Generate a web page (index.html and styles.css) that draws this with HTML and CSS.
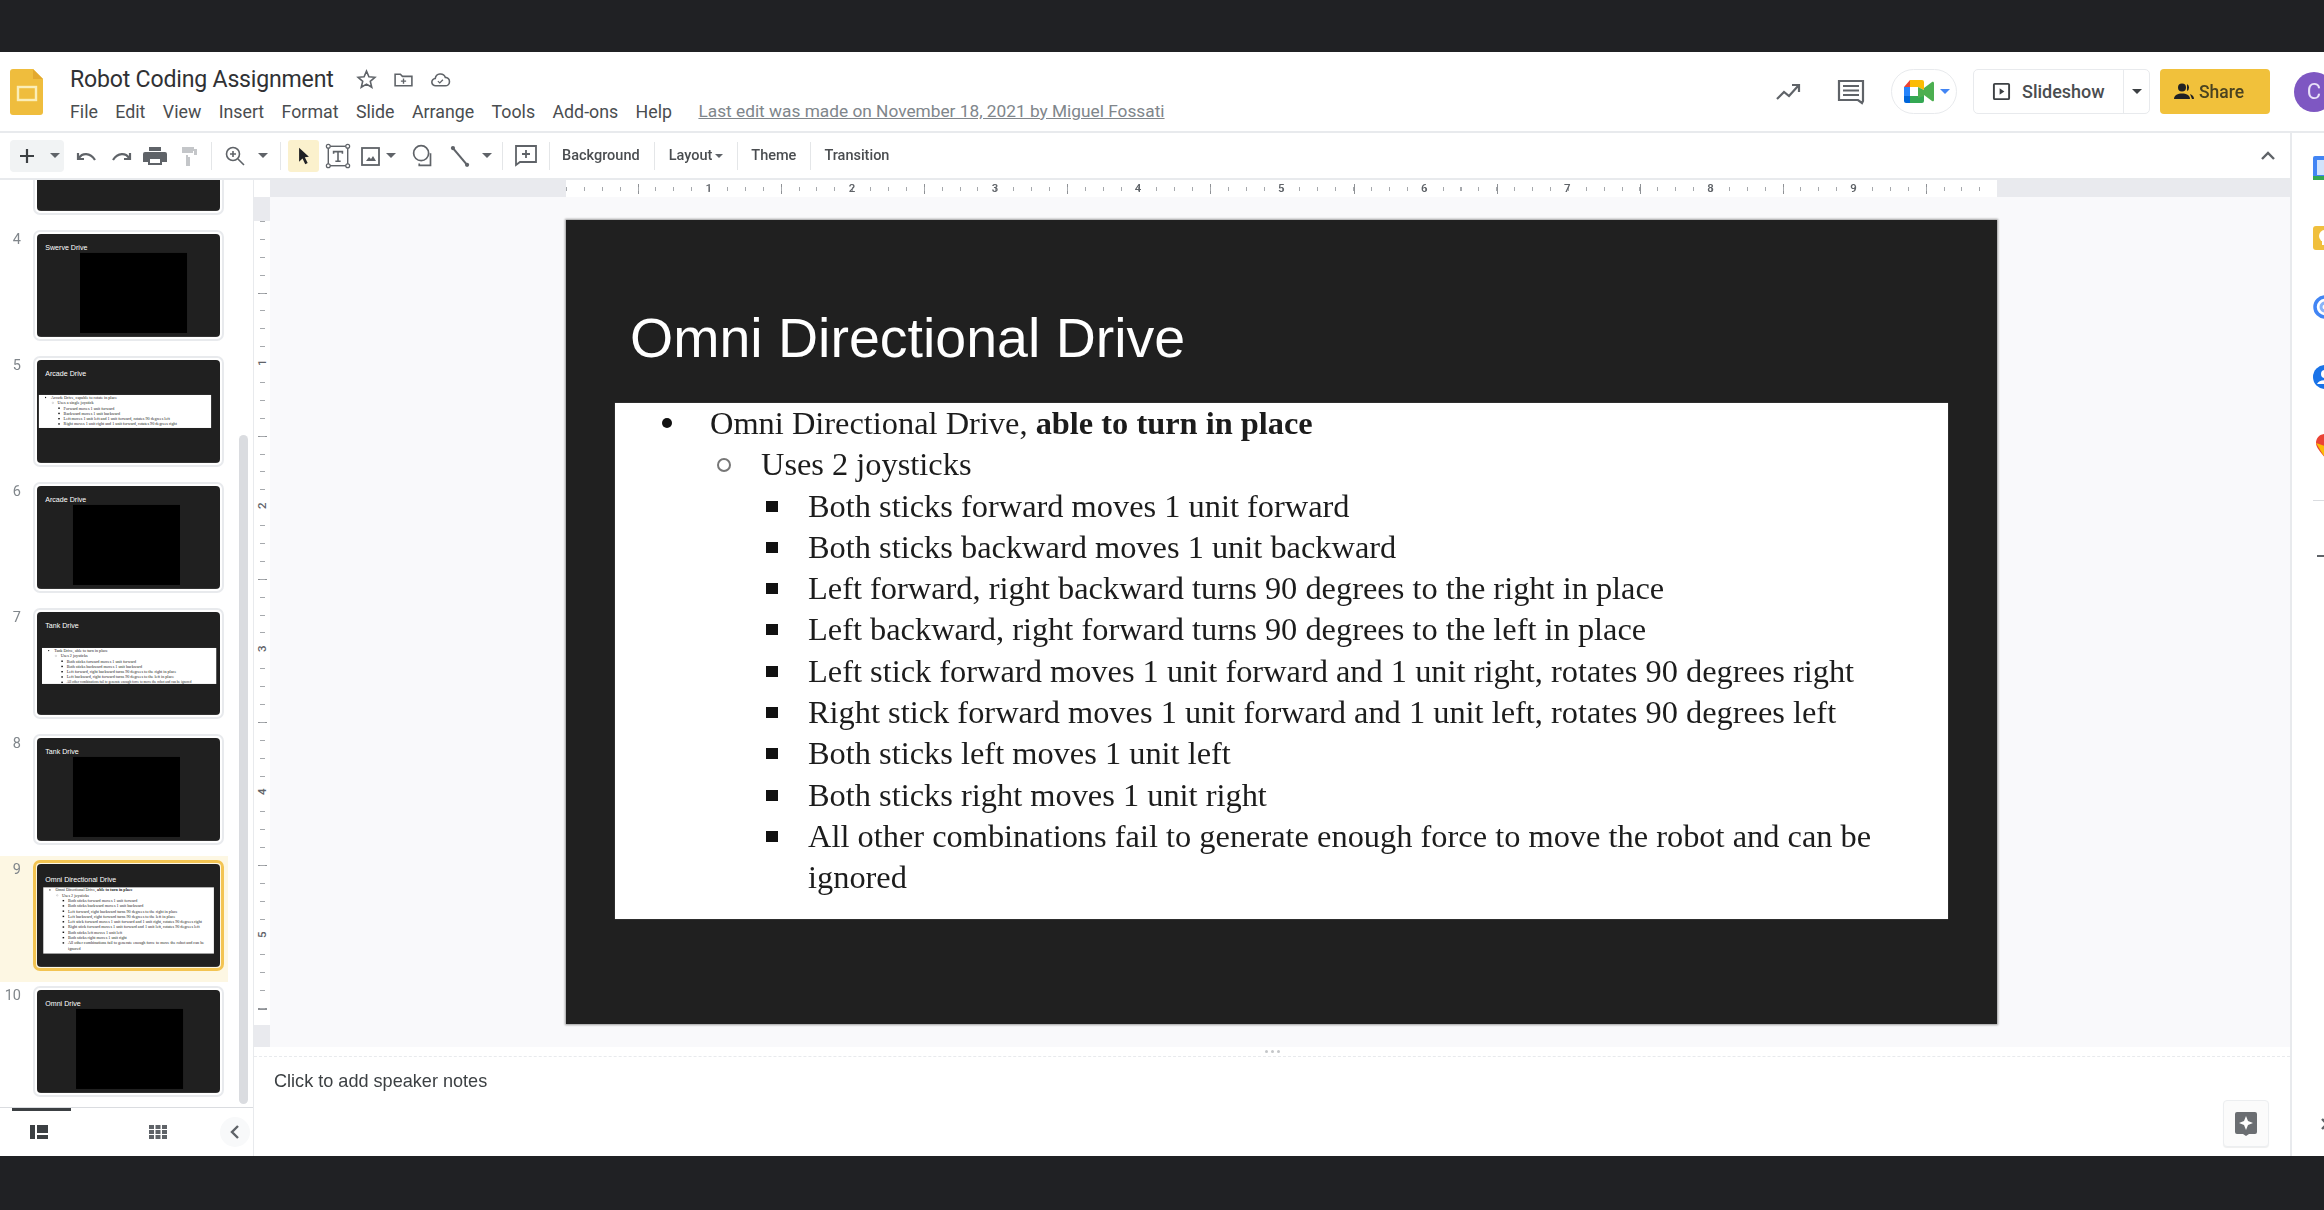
FILE: index.html
```html
<!DOCTYPE html>
<html lang="en">
<head>
<meta charset="utf-8">
<title>Robot Coding Assignment</title>
<link rel="stylesheet" href="styles.css">
</head>
<body>
<div class="letterbox"></div>
<div class="app">
  <header class="header">
    <svg class="logo" viewBox="0 0 33 46"><path d="M3 0h20l10 10v33a3 3 0 0 1-3 3H3a3 3 0 0 1-3-3V3a3 3 0 0 1 3-3z" fill="#efbd3d"/><path d="M23 0l10 10h-10z" fill="#e3a92f"/><rect x="8" y="18" width="18" height="13" fill="none" stroke="#fbeeb8" stroke-width="2.4"/></svg>
    <div class="doc">
      <div class="doc-title">
        <h1 class="title-text">Robot Coding Assignment</h1>
        <svg class="doc-icon star" viewBox="0 0 20 20"><path d="M10 2l2.3 5.4 5.7.5-4.4 3.8 1.4 5.7L10 14.4l-5 3 1.4-5.7L2 7.900l5.700-.5z" fill="none" stroke="#5f6368" stroke-width="1.500"/></svg>
        <svg class="doc-icon" viewBox="0 0 20 20"><path d="M2 5h5l2 2h9v9H2z" fill="none" stroke="#5f6368" stroke-width="1.500"/><path d="M10 9v5M7.500 11.500h5" stroke="#5f6368" stroke-width="1.300"/></svg>
        <svg class="doc-icon" viewBox="0 0 20 20"><path d="M5.500 16a3.500 3.500 0 0 1-.5-7 5 5 0 0 1 9.600-1A4 4 0 0 1 14.500 16z" fill="none" stroke="#5f6368" stroke-width="1.500"/><path d="M7.500 11.500l1.800 1.800 3-3" fill="none" stroke="#5f6368" stroke-width="1.200"/></svg>
      </div>
      <nav class="menu">
        <span class="menu-item">File</span><span class="menu-item">Edit</span><span class="menu-item">View</span><span class="menu-item">Insert</span><span class="menu-item">Format</span><span class="menu-item">Slide</span><span class="menu-item">Arrange</span><span class="menu-item">Tools</span><span class="menu-item">Add-ons</span><span class="menu-item">Help</span>
        <a class="last-edit">Last edit was made on November 18, 2021 by Miguel Fossati</a>
      </nav>
    </div>
    <div class="actions">
      <svg class="act-icon" viewBox="0 0 28 28"><path d="M3 21l7-7 5 4 9-10M18 7h7v7" fill="none" stroke="#5f6368" stroke-width="2.200"/></svg>
      <svg class="act-icon act-comment" viewBox="0 0 28 28"><path d="M2 3h24v20l-1 2-4-3H2z" fill="none" stroke="#5f6368" stroke-width="2.200"/><path d="M6 8h16M6 12.500h16M6 17h16" stroke="#5f6368" stroke-width="2"/></svg>
      <div class="meet">
        <svg class="meet-logo" viewBox="0 0 30 23"><path d="M6 0L0 7h6z" fill="#ea4335"/><path d="M6 0h12a2 2 0 0 1 2 2v8l-6-3H6z" fill="#fbbc04"/><path d="M0 7h6v9H0z" fill="#2684fc"/><path d="M0 16h6v7H2a2 2 0 0 1-2-2z" fill="#0066da"/><path d="M6 16h8l6-2v7a2 2 0 0 1-2 2H6z" fill="#34a853"/><path d="M14 7l6 3v-2l8-6c1-.8 2 0 2 1v17c0 1-1 1.800-2 1l-8-6v1l-6 2z" fill="#4caf50"/></svg>
        <span class="caret caret-blue"></span>
      </div>
      <div class="slideshow">
        <div class="ss-main">
          <svg class="ss-icon" viewBox="0 0 20 20"><rect x="2" y="2" width="16" height="16" rx="1" fill="none" stroke="#3c4043" stroke-width="2"/><path d="M8 6.500l5 3.500-5 3.500z" fill="#3c4043"/></svg>
          <span class="ss-label">Slideshow</span>
        </div>
        <div class="ss-more"><span class="caret caret-dark"></span></div>
      </div>
      <div class="share">
        <svg class="share-icon" viewBox="0 0 20 20"><circle cx="8" cy="5.500" r="4" fill="#202124"/><path d="M0 17c0-4 4-5.500 8-5.500s8 1.500 8 5.500z" fill="#202124"/><path d="M13 2a4 4 0 0 1 0 7M16 12c2 .8 4 2 4 5h-2" fill="#202124"/></svg>
        <span class="share-label">Share</span>
      </div>
      <div class="avatar">C</div>
    </div>
  </header>

  <div class="under-header">
    <div class="editor">
      <div class="toolbar">
        <div class="tool-add">
          <svg class="i18" viewBox="0 0 18 18"><path d="M9 2v14M2 9h14" stroke="#3c4043" stroke-width="2.200"/></svg>
          <span class="caret"></span>
        </div>
        <svg class="tool m6" viewBox="0 0 34 24"><path d="M8 9v6h6M9 14c3-5 11-6 16 2" fill="none" stroke="#5f6368" stroke-width="2.200"/></svg>
        <svg class="tool" viewBox="0 0 34 24"><path d="M26 9v6h-6M25 14c-3-5-11-6-16 2" fill="none" stroke="#5f6368" stroke-width="2.200"/></svg>
        <svg class="tool" viewBox="0 0 34 24"><path d="M11 3h12v4H11zM7 8h20a2 2 0 0 1 2 2v8h-5v3H10v-3H5v-8a2 2 0 0 1 2-2z" fill="#5f6368"/><path d="M12 15h10v4H12z" fill="#fff"/></svg>
        <svg class="tool" viewBox="0 0 34 24"><path d="M10 3h12v2h3v6H16v2h2v9h-4v-11h8V7h-1v2H10z" fill="#c4c6c9"/></svg>
        <span class="sep m5"></span>
        <svg class="tool m6" viewBox="0 0 34 24"><circle cx="15" cy="10" r="6.500" fill="none" stroke="#5f6368" stroke-width="1.600"/><path d="M20 15l6 6M15 7v6M12 10h6" stroke="#5f6368" stroke-width="1.600"/></svg>
        <span class="caret m6"></span>
        <span class="sep m12"></span>
        <div class="tool-select m7">
          <svg class="i18" viewBox="0 0 18 22"><path d="M3 1l12 11-5 .5 3.500 7-3 1.500-3.300-7L3 18z" fill="#202124"/></svg>
        </div>
        <svg class="tool-n m4" viewBox="-2 -2 34 34"><rect x="4" y="4" width="22" height="22" fill="none" stroke="#5f6368" stroke-width="1.600"/><g fill="#fff" stroke="#5f6368" stroke-width="1.400"><circle cx="4" cy="4" r="2.200"/><circle cx="26" cy="4" r="2.200"/><circle cx="4" cy="26" r="2.200"/><circle cx="26" cy="26" r="2.200"/></g><path d="M10 12.500V10h10v2.500M15 10v11M12 21h6" fill="none" stroke="#5f6368" stroke-width="1.800"/></svg>
        <svg class="tool-n m3" viewBox="0 0 30 30"><rect x="6" y="7" width="17" height="17" fill="none" stroke="#5f6368" stroke-width="1.800"/><path d="M10 20l3-4 2 2 2-3 3 5z" fill="#5f6368"/></svg>
        <span class="caret"></span>
        <svg class="tool-n m12" viewBox="-1 -1 32 32"><circle cx="13" cy="12" r="8" fill="none" stroke="#5f6368" stroke-width="1.800"/><path d="M23 12v13H11v-2" fill="none" stroke="#5f6368" stroke-width="1.800"/></svg>
        <svg class="tool-n m7" viewBox="-2 -2 34 34"><path d="M6 5l17 20" stroke="#5f6368" stroke-width="2.400"/><circle cx="7" cy="6" r="2.400" fill="#5f6368"/><circle cx="23" cy="25" r="2.400" fill="#5f6368"/></svg>
        <span class="caret m7"></span>
        <span class="sep m10"></span>
        <svg class="tool-n m8" viewBox="0 0 30 30"><path d="M5 5h20v16H9l-4 3z" fill="none" stroke="#5f6368" stroke-width="1.800"/><path d="M15 9v8M11 13h8" stroke="#5f6368" stroke-width="1.800"/></svg>
        <span class="sep m8"></span>
        <span class="tool-text m12">Background</span>
        <span class="sep m14"></span>
        <span class="tool-text m14">Layout</span><span class="caret caret-sm"></span>
        <span class="sep m14"></span>
        <span class="tool-text m13">Theme</span>
        <span class="sep m14"></span>
        <span class="tool-text m13">Transition</span>
        <svg class="collapse" viewBox="0 0 16 10"><path d="M2 8l6-6 6 6" fill="none" stroke="#5f6368" stroke-width="2.400"/></svg>
      </div>

      <div class="workspace">
        <aside class="filmstrip">
          <div class="film-scroll">
            <div class="film-list">
              <div class="film-row">
                <span class="film-num"></span>
                <div class="film-frame"><div class="film-clip"><div class="slide"></div></div></div>
              </div>
              <div class="film-row">
                <span class="film-num">4</span>
                <div class="film-frame"><div class="film-clip"><div class="slide slide--media">
                  <h2 class="slide-title">Swerve Drive</h2><div class="slide-media media-a"></div>
                </div></div></div>
              </div>
              <div class="film-row">
                <span class="film-num">5</span>
                <div class="film-frame"><div class="film-clip"><div class="slide slide--media">
                  <h2 class="slide-title">Arcade Drive</h2>
                  <div class="slide-body body-arcade">
                    <p class="li l1"><span>Arcade Drive, capable to rotate in place</span></p>
                    <p class="li l2"><span>Uses a single joystick</span></p>
                    <p class="li l3"><span>Forward moves 1 unit forward</span></p>
                    <p class="li l3"><span>Backward moves 1 unit backward</span></p>
                    <p class="li l3"><span>Left moves 1 unit left and 1 unit forward, rotates 90 degrees left</span></p>
                    <p class="li l3"><span>Right moves 1 unit right and 1 unit forward, rotates 90 degrees right</span></p>
                  </div>
                </div></div></div>
              </div>
              <div class="film-row">
                <span class="film-num">6</span>
                <div class="film-frame"><div class="film-clip"><div class="slide slide--media">
                  <h2 class="slide-title">Arcade Drive</h2><div class="slide-media media-b"></div>
                </div></div></div>
              </div>
              <div class="film-row">
                <span class="film-num">7</span>
                <div class="film-frame"><div class="film-clip"><div class="slide slide--media">
                  <h2 class="slide-title">Tank Drive</h2>
                  <div class="slide-body body-tank">
                    <p class="li l1"><span>Tank Drive, able to turn in place</span></p>
                    <p class="li l2"><span>Uses 2 joysticks</span></p>
                    <p class="li l3"><span>Both sticks forward moves 1 unit forward</span></p>
                    <p class="li l3"><span>Both sticks backward moves 1 unit backward</span></p>
                    <p class="li l3"><span>Left forward, right backward turns 90 degrees to the right in place</span></p>
                    <p class="li l3"><span>Left backward, right forward turns 90 degrees to the left in place</span></p>
                    <p class="li l3 li--tight"><span>All other combinations fail to generate enough force to move the robot and can be ignored</span></p>
                  </div>
                </div></div></div>
              </div>
              <div class="film-row">
                <span class="film-num">8</span>
                <div class="film-frame"><div class="film-clip"><div class="slide slide--media">
                  <h2 class="slide-title">Tank Drive</h2><div class="slide-media media-b"></div>
                </div></div></div>
              </div>
              <div class="film-row film-row--active">
                <span class="film-num">9</span>
                <div class="film-frame"><div class="film-clip"><div class="slide">
                  <h2 class="slide-title">Omni Directional Drive</h2>
                  <div class="slide-body">
                    <p class="li l1"><span>Omni Directional Drive, <b>able to turn in place</b></span></p>
                    <p class="li l2"><span>Uses 2 joysticks</span></p>
                    <p class="li l3"><span>Both sticks forward moves 1 unit forward</span></p>
                    <p class="li l3"><span>Both sticks backward moves 1 unit backward</span></p>
                    <p class="li l3"><span>Left forward, right backward turns 90 degrees to the right in place</span></p>
                    <p class="li l3"><span>Left backward, right forward turns 90 degrees to the left in place</span></p>
                    <p class="li l3"><span>Left stick forward moves 1 unit forward and 1 unit right, rotates 90 degrees right</span></p>
                    <p class="li l3"><span>Right stick forward moves 1 unit forward and 1 unit left, rotates 90 degrees left</span></p>
                    <p class="li l3"><span>Both sticks left moves 1 unit left</span></p>
                    <p class="li l3"><span>Both sticks right moves 1 unit right</span></p>
                    <p class="li l3"><span>All other combinations fail to generate enough force to move the robot and can be ignored</span></p>
                  </div>
                </div></div></div>
              </div>
              <div class="film-row">
                <span class="film-num">10</span>
                <div class="film-frame"><div class="film-clip"><div class="slide slide--media">
                  <h2 class="slide-title">Omni Drive</h2><div class="slide-media media-c"></div>
                </div></div></div>
              </div>
            </div>
            <div class="film-scrollbar"></div>
          </div>
          <div class="film-foot">
            <span class="film-tab"></span>
            <svg class="foot-icon foot-a" viewBox="0 0 18 14"><path d="M0 0h5v14H0zM7 0h11v8H7zM7 10h11v4H7z" fill="#3c4043"/></svg>
            <svg class="foot-icon foot-b" viewBox="0 0 18 14"><path d="M0 0h5v4H0zM6.500 0h5v4h-5zM13 0h5v4h-5zM0 5h5v4H0zM6.500 5h5v4h-5zM13 5h5v4h-5zM0 10h5v4H0zM6.500 10h5v4h-5zM13 10h5v4h-5z" fill="#5f6368"/></svg>
            <div class="foot-back"><svg class="foot-chev" viewBox="0 0 10 16"><path d="M8 2L2 8l6 6" fill="none" stroke="#5f6368" stroke-width="2.400"/></svg></div>
          </div>
        </aside>

        <main class="main">
          <div class="stage">
            <div class="corner"></div>
            <div class="hruler">
              <div class="hruler-page">
                <span class="rcell">1</span><span class="rcell">2</span><span class="rcell">3</span><span class="rcell">4</span><span class="rcell">5</span><span class="rcell">6</span><span class="rcell">7</span><span class="rcell">8</span><span class="rcell">9</span>
              </div>
            </div>
            <div class="vruler">
              <div class="vruler-page">
                <span class="vcell"><i class="vnum">1</i></span><span class="vcell"><i class="vnum">2</i></span><span class="vcell"><i class="vnum">3</i></span><span class="vcell"><i class="vnum">4</i></span><span class="vcell"><i class="vnum">5</i></span>
              </div>
            </div>
            <div class="canvas">
              <div class="slide">
                <h2 class="slide-title">Omni Directional Drive</h2>
                <div class="slide-body">
                  <p class="li l1"><span>Omni Directional Drive, <b>able to turn in place</b></span></p>
                  <p class="li l2"><span>Uses 2 joysticks</span></p>
                  <p class="li l3"><span>Both sticks forward moves 1 unit forward</span></p>
                  <p class="li l3"><span>Both sticks backward moves 1 unit backward</span></p>
                  <p class="li l3"><span>Left forward, right backward turns 90 degrees to the right in place</span></p>
                  <p class="li l3"><span>Left backward, right forward turns 90 degrees to the left in place</span></p>
                  <p class="li l3"><span>Left stick forward moves 1 unit forward and 1 unit right, rotates 90 degrees right</span></p>
                  <p class="li l3"><span>Right stick forward moves 1 unit forward and 1 unit left, rotates 90 degrees left</span></p>
                  <p class="li l3"><span>Both sticks left moves 1 unit left</span></p>
                  <p class="li l3"><span>Both sticks right moves 1 unit right</span></p>
                  <p class="li l3"><span>All other combinations fail to generate enough force to move the robot and can be ignored</span></p>
                </div>
              </div>
            </div>
          </div>
          <div class="notes">
            <div class="notes-grip"><span class="grip-dot"></span><span class="grip-dot"></span><span class="grip-dot"></span></div>
            <div class="notes-body">
              <span class="notes-text">Click to add speaker notes</span>
              <div class="explore"><svg class="explore-icon" viewBox="0 0 22 24"><path d="M2 0h18a2 2 0 0 1 2 2v18a2 2 0 0 1-2 2h-6l-3 2-3-2H2a2 2 0 0 1-2-2V2a2 2 0 0 1 2-2z" fill="#6b6e72"/><path d="M11 4l2 5 5 2-5 2-2 5-2-5-5-2 5-2z" fill="#fff"/></svg></div>
            </div>
          </div>
        </main>
      </div>
    </div>

    <aside class="side">
      <svg class="side-icon" viewBox="0 0 24 24"><rect width="24" height="24" rx="2" fill="#4285f4"/><rect x="4" y="4" width="16" height="15" fill="#d2e3fc"/><rect y="20" width="24" height="4" fill="#34a853"/></svg>
      <svg class="side-icon" viewBox="0 0 24 24"><rect width="24" height="24" rx="3" fill="#f0bf3c"/><circle cx="12" cy="10" r="6" fill="#fff"/><rect x="9" y="15" width="6" height="4" fill="#fff"/></svg>
      <svg class="side-icon" viewBox="0 0 24 24"><circle cx="12" cy="12" r="10" fill="none" stroke="#4285f4" stroke-width="3.500"/><circle cx="12" cy="12" r="4" fill="none" stroke="#8ab4f8" stroke-width="3"/></svg>
      <svg class="side-icon" viewBox="0 0 24 24"><circle cx="12" cy="12" r="12" fill="#1a73e8"/><circle cx="12" cy="9" r="4" fill="#fff"/><path d="M4 19c2-5 14-5 16 0z" fill="#fff"/></svg>
      <svg class="side-icon" viewBox="0 0 24 24"><path d="M12 0C6 0 3 5 3 9c0 5 5 9 9 15z" fill="#ea4335"/><path d="M3 9l9 15V12z" fill="#fbbc04"/><path d="M12 0c6 0 9 5 9 9z" fill="#4285f4"/><path d="M12 24c4-6 9-10 9-15l-9 3z" fill="#34a853"/></svg>
      <span class="side-sep"></span>
      <svg class="side-plus" viewBox="0 0 24 24"><path d="M12 3v18M0 12h24" stroke="#5f6368" stroke-width="2.200"/></svg>
      <svg class="side-chev" viewBox="0 0 12 14"><path d="M2 2l5 5-5 5" fill="none" stroke="#5f6368" stroke-width="2.400"/></svg>
    </aside>
  </div>
</div>
<div class="letterbox letterbox--bottom"></div>
</body>
</html>
```

FILE: styles.css
```css
* { box-sizing: border-box; }
html, body { margin: 0; height: 100%; }
body {
  width: 2324px; height: 1210px; overflow: hidden; background: #202124;
  display: flex; flex-direction: column;
  font-family: Roboto, "Liberation Sans", sans-serif; color: #3c4043;
}
.letterbox { height: 52px; flex: none; background: #202124; }
.letterbox--bottom { height: 54px; }
.app { flex: 1; min-height: 0; display: flex; flex-direction: column; background: #fff; filter: blur(.55px); }

/* Header */
.header { height: 81px; flex: none; display: flex; align-items: flex-start; border-bottom: 2px solid #e8eaed; }
.logo { width: 33px; height: 46px; margin: 17px 0 0 10px; flex: none; }
.doc { margin-left: 27px; padding-top: 11px; }
.doc-title { display: flex; align-items: center; height: 32px; }
.title-text { margin: 0; font-size: 23.100px; font-weight: 400; color: #303134; letter-spacing: -.2px; white-space: nowrap; }
.doc-icon { width: 21px; height: 21px; margin-left: 16px; }
.doc-icon.star { margin-left: 22px; }
.menu { display: flex; align-items: center; height: 30px; margin-top: 1px; font-size: 17.800px; color: #4a4d50; }
.menu-item { margin-right: 17.400px; white-space: nowrap; }
.last-edit { margin-left: 9px; font-size: 17.300px; color: #80868b; text-decoration: underline; white-space: nowrap; }
.actions { margin-left: auto; display: flex; align-items: center; padding-top: 17px; height: 62px; }
.act-icon { width: 28px; height: 28px; }
.act-comment { margin-left: 35px; }
.meet { display: flex; align-items: center; width: 66px; height: 45px; margin-left: 26px; padding-left: 12px; border: 1px solid #e8eaed; border-radius: 23px; }
.meet-logo { width: 30px; height: 23px; }
.caret { display: inline-block; flex: none; width: 0; height: 0; border: 5px solid transparent; border-top: 5px solid #5f6368; border-bottom: 0; }
.caret-blue { margin-left: 6px; border-top-color: #4285f4; }
.caret-dark { border-top-color: #3c4043; }
.slideshow { display: flex; height: 45px; width: 177px; margin-left: 16px; border: 1px solid #e8eaed; border-radius: 5px; }
.ss-main { display: flex; align-items: center; width: 150px; padding-left: 18px; border-right: 1px solid #e8eaed; }
.ss-icon { width: 19px; height: 19px; }
.ss-label { margin-left: 11px; font-size: 18px; font-weight: 500; color: #4a4d50; }
.ss-more { flex: 1; display: flex; align-items: center; justify-content: center; }
.share { display: flex; align-items: center; width: 110px; height: 45px; margin-left: 10px; padding-left: 14px; background: #f1c13b; border-radius: 4px; }
.share-icon { width: 20px; height: 20px; }
.share-label { margin-left: 5px; font-size: 17.500px; font-weight: 500; color: #4a4320; }
.avatar { width: 40px; height: 40px; margin: 0 -10px 0 24px; border-radius: 50%; background: #7e57c2; color: #e8e0f8; font-size: 22px; display: flex; align-items: center; justify-content: center; flex: none; }

/* Under header */
.under-header { flex: 1; min-height: 0; display: flex; }
.editor { flex: 1; min-width: 0; display: flex; flex-direction: column; }
.toolbar { height: 47px; flex: none; display: flex; align-items: center; padding-left: 10px; border-bottom: 2px solid #e8eaed; }
.tool-add { width: 54px; height: 32px; background: #f1f3f4; border-radius: 4px; display: flex; align-items: center; justify-content: space-between; padding: 0 4px 0 8px; }
.i18 { width: 18px; height: 18px; }
.tool { width: 34px; height: 24px; flex: none; }
.tool-n { width: 30px; height: 30px; flex: none; }
.sep { width: 1px; height: 28px; background: #e4e6e8; flex: none; }
.tool-select { width: 31px; height: 32px; background: #fbf1cd; border-radius: 3px; display: flex; align-items: center; justify-content: center; }
.tool-text { font-size: 14.500px; font-weight: 500; color: #4a4d50; white-space: nowrap; }
.caret-sm { margin-left: 3px; border-width: 4px; border-top-width: 4px; }
.m3 { margin-left: 3px; } .m4 { margin-left: 4px; } .m5 { margin-left: 5px; } .m6 { margin-left: 6px; }
.m7 { margin-left: 7px; } .m8 { margin-left: 8px; } .m10 { margin-left: 10px; } .m12 { margin-left: 12px; } .m13 { margin-left: 13px; } .m14 { margin-left: 14px; }
.collapse { width: 16px; height: 10px; margin: 0 14px 0 auto; }

/* Workspace */
.workspace { flex: 1; min-height: 0; display: flex; }
.filmstrip { width: 254px; flex: none; display: flex; flex-direction: column; border-right: 1px solid #e8eaed; }
.film-scroll { position: relative; flex: 1; min-height: 0; overflow: hidden; }
.film-list { margin-top: -80px; }
.film-row { display: flex; height: 126px; width: 228px; padding-top: 4px; }
.film-row--active { background: #fdf7e3; }
.film-num { width: 21px; margin-right: 12px; text-align: right; font-size: 14.500px; line-height: 20px; color: #80868b; flex: none; }
.film-frame { width: 191px; height: 111px; padding: 2px; border: 2px solid #e8eaed; border-radius: 7px; flex: none; }
.film-row--active .film-frame { padding: 1px; border: 3px solid #f3c452; }
.film-clip { width: 183px; height: 103px; overflow: hidden; border-radius: 4px; }
.film-clip .slide { transform: scale(.128); transform-origin: 0 0; box-shadow: none; }
.film-scrollbar { position: absolute; left: 239px; top: 255px; width: 9px; height: 669px; background: #dadce0; border-radius: 5px; }
.film-foot { position: relative; height: 49px; flex: none; display: flex; align-items: center; border-top: 1px solid #dadce0; }
.film-tab { position: absolute; left: 12px; top: 0; width: 59px; height: 3px; background: #3c4043; }
.foot-icon { width: 18px; height: 14px; flex: none; }
.foot-a { margin-left: 30px; }
.foot-b { margin-left: 101px; }
.foot-back { width: 30px; height: 30px; margin-left: 53px; border-radius: 50%; background: #f8f9fa; display: flex; align-items: center; justify-content: center; }
.foot-chev { width: 10px; height: 16px; }

.main { flex: 1; min-width: 0; display: flex; flex-direction: column; }
.stage { height: 867px; flex: none; display: grid; grid-template-columns: 16px 1fr; grid-template-rows: 17px 1fr; }
.corner { background: #fff; }
.hruler { background: #e9eaee; padding-left: 296px; }
.hruler-page {
  width: 1431px; height: 100%; display: flex; font-size: 11.500px; font-weight: 500; color: #5f6368; line-height: 17px;
  background-color: #fff; background-repeat: no-repeat;
  background-image: repeating-linear-gradient(to right, #a6a9ad 0 1px, transparent 1px 17.890px), repeating-linear-gradient(to right, #8f9296 0 1px, transparent 1px 143.100px);
  background-size: 100% 4px, 100% 10px;
  background-position: 0 7px, 71.550px 4px;
}
.rcell { width: 143.100px; text-align: right; flex: none; transform: translateX(3px); }
.vruler { background: #e9eaee; padding: 24px 0 22px; overflow: hidden; }
.vruler-page {
  height: 804px; display: flex; flex-direction: column; font-size: 11.500px; font-weight: 500; color: #5f6368;
  background-color: #fff; background-repeat: no-repeat;
  background-image: repeating-linear-gradient(#a6a9ad 0 1px, transparent 1px 17.890px), repeating-linear-gradient(#8f9296 0 1px, transparent 1px 143.100px);
  background-size: 5px 100%, 9px 100%;
  background-position: 6px 0, 4px 71.550px;
}
.vcell { height: 143.100px; flex: none; display: flex; align-items: flex-end; justify-content: center; transform: translateY(1.500px); }
.vnum { font-style: normal; writing-mode: vertical-rl; transform: rotate(180deg); line-height: 16px; background: #fff; }
.canvas { background: #f9f9fb; padding: 23px 0 0 296px; overflow: hidden; }

/* Slide */
.slide { width: 1431px; height: 804px; background: #202020; box-shadow: 0 0 2px 1px #9b9b9b; display: flex; flex-direction: column; }
.slide-title { margin: 0; height: 183px; padding: 88px 0 0 64px; font: 400 55.500px/60px "Liberation Sans", Arial, sans-serif; color: #fff; flex: none; }
.slide-body { margin-left: 49px; width: 1333px; height: 516px; background: #fff; color: #1c1c1c; font: 32.400px/41.300px "Liberation Serif", "Times New Roman", serif; box-shadow: 0 0 1px #777; }
.li { margin: 0; display: flex; }
.li b { font-weight: 700; }
.li::before { content: ""; flex: none; }
.l1 { padding-left: 47px; }
.l1::before { width: 10px; height: 10px; margin: 15px 38px 0 0; border-radius: 50%; background: #111; }
.l2 { padding-left: 102px; }
.l2::before { width: 10px; height: 10px; margin: 14px 30px 0 0; border-radius: 50%; border: 2px solid #777; }
.l3 { padding-left: 151px; }
.l3::before { width: 12px; height: 11px; margin: 15px 30px 0 0; background: #111; }
.li--tight span { white-space: nowrap; font-size: 27px; }
.slide--media .slide-title { height: 148px; padding-top: 78px; }
.slide-media { background: #000; width: 836px; height: 625px; flex: none; }
.media-a { margin-left: 336px; }
.media-b { margin-left: 281px; }
.media-c { margin-left: 305px; }
.slide--media .body-arcade { margin: 125px 0 0 15px; width: 1345px; height: 258px; }
.slide--media .body-tank { margin: 133px 0 0 39px; width: 1361px; height: 281px; }

/* Notes */
.notes { flex: 1; min-height: 0; display: flex; flex-direction: column; }
.notes-grip { height: 9px; flex: none; display: flex; justify-content: center; align-items: center; gap: 3px; }
.grip-dot { width: 3px; height: 3px; border-radius: 50%; background: #c4c6c9; }
.notes-body { flex: 1; display: flex; justify-content: space-between; padding: 13px 21px 9px 20px; border-top: 1px dashed #e8eaed; }
.notes-text { font: 18.100px/22px "Liberation Sans", Arial, sans-serif; color: #3c4043; }
.explore { width: 46px; height: 47px; align-self: flex-end; border: 1px solid #eceef0; border-radius: 4px; background: #fbfbfb; display: flex; align-items: center; justify-content: center; box-shadow: 0 1px 1px #eee; }
.explore-icon { width: 22px; height: 24px; }

/* Side panel */
.side { width: 34px; flex: none; display: flex; flex-direction: column; padding: 23px 0 0 21px; border-left: 2px solid #e8eaed; overflow: hidden; }
.side-icon { width: 24px; height: 24px; flex: none; margin-bottom: 45.500px; }
.side-sep { width: 24px; height: 1px; background: #dadce0; flex: none; margin-top: -4px; }
.side-plus { width: 24px; height: 24px; flex: none; margin: 43px 0 0 4px; }
.side-chev { width: 12px; height: 14px; flex: none; margin: 549px 0 0 7px; }
```
